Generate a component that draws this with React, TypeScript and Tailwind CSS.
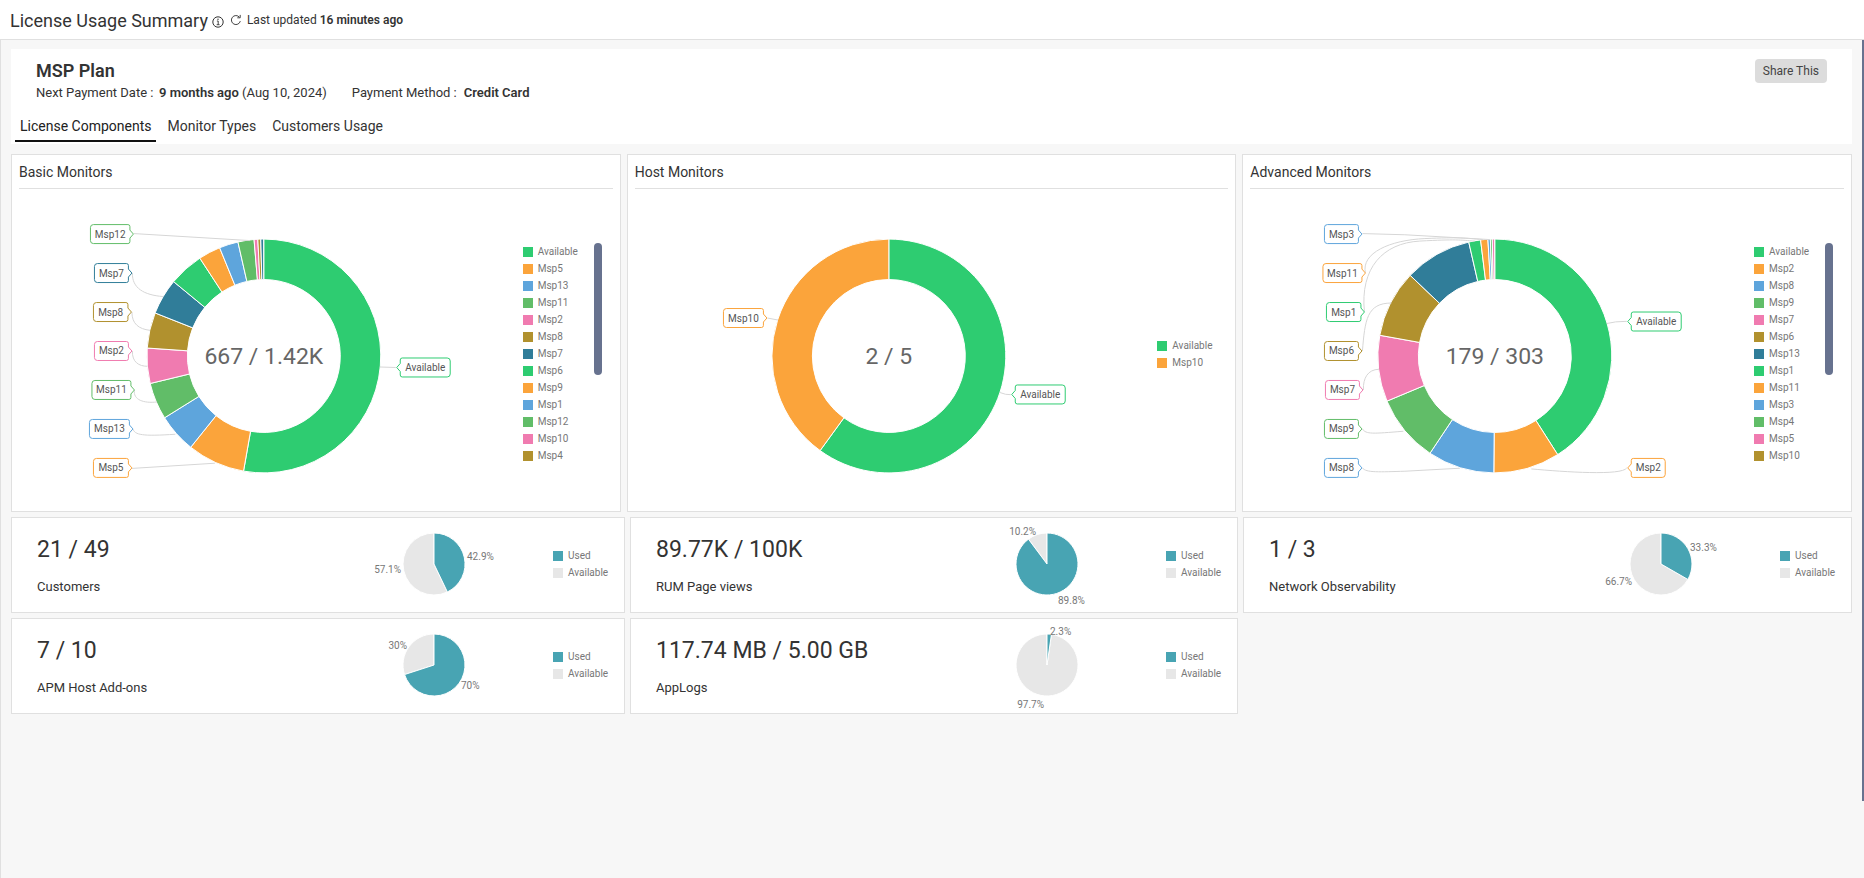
import { useState } from "react";

const GREEN = "#2ecc71";
const ORANGE = "#fba43b";
const BLUE = "#5ea5dc";
const LEAF = "#61bd68";
const PINK = "#f07bb0";
const GOLD = "#b1912e";
const TEAL = "#307d99";

type Slice = { color: string; from: number; to: number };
type Callout = {
  text: string;
  color: string;
  left: number;
  right: number;
  y: number;
  side: "left" | "right";
  line: string;
};
type LegendItem = { text: string; color: string };
type DonutData = {
  title: string;
  total: string;
  originX: number;
  width: number;
  slices: Slice[];
  callouts: Callout[];
  legend: LegendItem[];
  scroll: boolean;
};

const palette = [GREEN, ORANGE, BLUE, LEAF, PINK, GOLD, TEAL];
const colored = (names: string[]): LegendItem[] =>
  names.map((text, i) => ({ text, color: palette[i % palette.length] }));
const slicesFrom = (bounds: number[]): Slice[] =>
  bounds.slice(1).map((to, i) => ({ from: bounds[i], to, color: palette[i % palette.length] }));

const donuts: DonutData[] = [
  {
    title: "Basic Monitors",
    total: "667 / 1.42K",
    originX: 252,
    width: 511,
    slices: slicesFrom([0, 190, 218.7, 238.1, 256.4, 273.9, 291.6, 309.5, 326.8, 337.8, 347.2, 355.2, 357.05, 358.5, 359.9]),
    callouts: [
      { text: "Msp12", color: LEAF, left: -173.5, right: -134, y: -122, side: "left", line: "M-130 -122.5L-14 -115.5" },
      { text: "Msp7", color: TEAL, left: -169.5, right: -135.5, y: -83, side: "left", line: "M-131.5 -83C-132 -68 -120 -61 -101 -59.5" },
      { text: "Msp8", color: GOLD, left: -170.5, right: -136, y: -44, side: "left", line: "M-132 -44C-132 -32 -125 -27 -114 -25.7" },
      { text: "Msp2", color: PINK, left: -169.5, right: -135.5, y: -5, side: "left", line: "M-131.5 -5C-132 6 -125 10.3 -116.5 10.3" },
      { text: "Msp11", color: LEAF, left: -172, right: -133, y: 34, side: "left", line: "M-129.5 34C-131 44 -120 47.5 -107 46" },
      { text: "Msp13", color: BLUE, left: -174.5, right: -134.5, y: 73, side: "left", line: "M-131 73C-129 79 -122 80.5 -88.5 78.3" },
      { text: "Msp5", color: ORANGE, left: -170.5, right: -135.5, y: 112, side: "left", line: "M-132 112.5L-49 107.3" },
      { text: "Available", color: GREEN, left: 136.5, right: 186.5, y: 11.5, side: "right", line: "M116 11L132 11.5" },
    ],
    legend: colored(["Available", "Msp5", "Msp13", "Msp11", "Msp2", "Msp8", "Msp7", "Msp6", "Msp9", "Msp1", "Msp12", "Msp10", "Msp4"]),
    scroll: true,
  },
  {
    title: "Host Monitors",
    total: "2 / 5",
    originX: 261,
    width: 530,
    slices: slicesFrom([0, 216, 360]),
    callouts: [
      { text: "Msp10", color: ORANGE, left: -165.5, right: -125.5, y: -38, side: "left", line: "M-121.5 -38L-111 -36" },
      { text: "Available", color: GREEN, left: 126.5, right: 176.5, y: 38.5, side: "right", line: "M111 36.5Q117 39 122 38.7" },
    ],
    legend: colored(["Available", "Msp10"]),
    scroll: false,
  },
  {
    title: "Advanced Monitors",
    total: "179 / 303",
    originX: 252,
    width: 511,
    slices: slicesFrom([0, 147.5, 180.5, 213.7, 247.3, 280.2, 313.6, 347.1, 353, 356.6, 357.8, 358.75, 359.9]),
    callouts: [
      { text: "Msp3", color: BLUE, left: -170.5, right: -136.5, y: -122, side: "left", line: "M-132.5 -122.5L-90 -121.3L-5 -116.5" },
      { text: "Msp11", color: ORANGE, left: -172, right: -133, y: -83, side: "left", line: "M-129.5 -83C-134 -103 -105 -116 -70 -117.5S-30 -118 -12 -116.5" },
      { text: "Msp1", color: GREEN, left: -168.5, right: -134, y: -44, side: "left", line: "M-130.5 -44C-135 -88 -112 -113 -75 -115S-35 -116 -20 -115" },
      { text: "Msp6", color: GOLD, left: -170.5, right: -136.5, y: -5, side: "left", line: "M-132.5 -5C-130 -36 -128 -53 -103.5 -53" },
      { text: "Msp7", color: PINK, left: -169.5, right: -135.5, y: 34, side: "left", line: "M-131.5 34C-132 22 -127 13.5 -116 13.3" },
      { text: "Msp9", color: LEAF, left: -170.5, right: -136.5, y: 73, side: "left", line: "M-132.5 73C-129 78.5 -122 77.8 -91.5 75.3" },
      { text: "Msp8", color: BLUE, left: -170.5, right: -136.5, y: 112, side: "left", line: "M-132.5 112C-129 117 -115 116 -90 115.3L-35 112.3" },
      { text: "Available", color: GREEN, left: 136.5, right: 186.5, y: -34.5, side: "right", line: "M112 -32.5Q120 -34.7 132 -34.7" },
      { text: "Msp2", color: ORANGE, left: 136.5, right: 170.5, y: 112, side: "right", line: "M36.5 113C70 116 127 120 132 112" },
    ],
    legend: colored(["Available", "Msp2", "Msp8", "Msp9", "Msp7", "Msp6", "Msp13", "Msp1", "Msp11", "Msp3", "Msp4", "Msp5", "Msp10"]),
    scroll: true,
  },
];

const point = (deg: number, r: number) => {
  const a = ((deg - 90) * Math.PI) / 180;
  return `${(Math.cos(a) * r).toFixed(2)} ${(Math.sin(a) * r).toFixed(2)}`;
};

const ring = (from: number, to: number, outer: number, inner: number) => {
  const large = to - from > 180 ? 1 : 0;
  return `M${point(from, outer)}A${outer} ${outer} 0 ${large} 1 ${point(to, outer)}L${point(to, inner)}A${inner} ${inner} 0 ${large} 0 ${point(from, inner)}Z`;
};

const wedge = (from: number, to: number, r: number) =>
  `M0 0L${point(from, r)}A${r} ${r} 0 ${to - from > 180 ? 1 : 0} 1 ${point(to, r)}Z`;

function CalloutBox({ c }: { c: Callout }) {
  const l = c.side === "left" ? c.left : -c.right;
  const r = c.side === "left" ? c.right : -c.left;
  const d = `M${l + 3} -9.5H${r - 2}Q${r} -9.5 ${r} -7.5V-4L${r + 3.5} 0L${r} 4V7.5Q${r} 9.5 ${r - 2} 9.5H${l + 3}Q${l} 9.5 ${l} 6.5V-6.5Q${l} -9.5 ${l + 3} -9.5Z`;
  return (
    <g>
      <path d={c.line} fill="none" stroke="#d6d6d6" />
      <g transform={`translate(0 ${c.y})`}>
        <path d={d} transform={c.side === "right" ? "scale(-1 1)" : undefined} fill="#fff" stroke={c.color} />
        <text x={(c.left + c.right) / 2} y={3.5} textAnchor="middle" className="fill-[#555] text-[10px]">
          {c.text}
        </text>
      </g>
    </g>
  );
}

function Legend({ items }: { items: LegendItem[] }) {
  return (
    <ul className="text-[10px] leading-[17px] text-[#777]">
      {items.map((item) => (
        <li key={item.text} className="flex items-center gap-[5px]">
          <span className="size-2.5 shrink-0" style={{ backgroundColor: item.color }} />
          {item.text}
        </li>
      ))}
    </ul>
  );
}

function DonutCard({ data }: { data: DonutData }) {
  return (
    <section className="border border-[#e0e0e0] bg-white px-[7px]">
      <h2 className="border-b border-[#e0e0e0] pt-0.5 text-sm leading-[31px]">{data.title}</h2>
      <div className="-mx-[7px] flex">
        <svg viewBox={`${-data.originX} -167 ${data.width} 322`} className="h-[322px] min-w-0 flex-1">
          {data.slices.map((s) => (
            <path key={s.from} d={ring(s.from, s.to, 117, 76.5)} fill={s.color} stroke="#fff" strokeWidth="1" />
          ))}
          {data.callouts.map((c) => (
            <CalloutBox key={c.text} c={c} />
          ))}
          <text y="8" textAnchor="middle" className="fill-[#666] text-[23px]">
            {data.total}
          </text>
        </svg>
        {data.scroll ? (
          <div className="flex w-[97px] shrink-0 pt-[54px]">
            <div className="w-[71px]">
              <Legend items={data.legend} />
            </div>
            <div className="h-[132px] w-2 rounded-full bg-[#67728f]" />
          </div>
        ) : (
          <div className="w-[78px] shrink-0 pt-[148px]">
            <Legend items={data.legend} />
          </div>
        )}
      </div>
    </section>
  );
}

type Percent = { text: string; x: number; y: number; anchor: "start" | "end" };
type Stat = { value: string; label: string; used: number; percents: Percent[] };

const stats: Stat[] = [
  {
    value: "21 / 49",
    label: "Customers",
    used: 42.9,
    percents: [
      { text: "42.9%", x: 33, y: -4, anchor: "start" },
      { text: "57.1%", x: -33, y: 9, anchor: "end" },
    ],
  },
  {
    value: "89.77K / 100K",
    label: "RUM Page views",
    used: 89.8,
    percents: [
      { text: "89.8%", x: 11, y: 40, anchor: "start" },
      { text: "10.2%", x: -11, y: -29, anchor: "end" },
    ],
  },
  {
    value: "1 / 3",
    label: "Network Observability",
    used: 33.3,
    percents: [
      { text: "33.3%", x: 29, y: -13, anchor: "start" },
      { text: "66.7%", x: -29, y: 21, anchor: "end" },
    ],
  },
  {
    value: "7 / 10",
    label: "APM Host Add-ons",
    used: 70,
    percents: [
      { text: "70%", x: 27, y: 24, anchor: "start" },
      { text: "30%", x: -27, y: -16, anchor: "end" },
    ],
  },
  {
    value: "117.74 MB / 5.00 GB",
    label: "AppLogs",
    used: 2.3,
    percents: [
      { text: "2.3%", x: 3, y: -30, anchor: "start" },
      { text: "97.7%", x: -3, y: 43, anchor: "end" },
    ],
  },
];

const usageLegend: LegendItem[] = [
  { text: "Used", color: "#48a4b3" },
  { text: "Available", color: "#e7e7e7" },
];

function StatCard({ stat }: { stat: Stat }) {
  return (
    <section className="flex h-24 items-start border border-[#e0e0e0] bg-white">
      <div className="flex min-w-0 flex-1 flex-col gap-[11px] pt-4 pl-[25px]">
        <p className="text-[23px] leading-8">{stat.value}</p>
        <p className="text-[13px] leading-5">{stat.label}</p>
      </div>
      <svg viewBox="-70 -46 140 94" className="h-[94px] w-[140px] shrink-0">
        <path d={wedge(stat.used * 3.6, 360, 31)} fill="#e7e7e7" stroke="#fff" />
        <path d={wedge(0, stat.used * 3.6, 31)} fill="#48a4b3" stroke="#fff" />
        {stat.percents.map((p) => (
          <text key={p.text} x={p.x} y={p.y} textAnchor={p.anchor} className="fill-[#777] text-[10px]">
            {p.text}
          </text>
        ))}
      </svg>
      <div className="w-[120px] shrink-0 pt-[29px] pl-[49px]">
        <Legend items={usageLegend} />
      </div>
    </section>
  );
}

const tabs = ["License Components", "Monitor Types", "Customers Usage"];

export default function App() {
  const [active, setActive] = useState(tabs[0]);
  return (
    <div className="flex min-h-screen flex-col bg-[#f7f7f7] font-['Roboto',sans-serif] text-[#333]">
      <header className="flex h-10 items-center border-b border-[#e0e0e0] bg-white pl-2.5">
        <h1 className="pt-0.5 text-lg">License Usage Summary</h1>
        <svg viewBox="0 0 12 12" className="mt-1 ml-1 size-3" fill="none" stroke="#333">
          <circle cx="6" cy="6" r="5.2" strokeWidth="1" />
          <path d="M4.9 5h1.3v3.6M4.7 8.7h2.9" strokeWidth="0.9" />
          <circle cx="6" cy="3.2" r="0.7" fill="#333" stroke="none" />
        </svg>
        <button type="button" aria-label="Refresh" className="ml-1.5">
          <svg viewBox="0 0 12 12" className="size-3" fill="none" stroke="#444">
            <path d="M10.3 7.1A4.5 4.5 0 1 1 9.4 3.2" />
            <path d="M10.2 0.9V3.8H7.3" />
          </svg>
        </button>
        <p className="ml-[5px] text-xs">
          Last updated <b className="font-semibold">16 minutes ago</b>
        </p>
      </header>
      <div className="flex flex-1 items-start border-l border-[#e0e0e0]">
        <main className="min-w-0 flex-1 pt-[9px] pr-2.5 pl-2.5">
          <section className="bg-white">
            <div className="flex items-start justify-between pt-2.5 pr-[25px] pl-[25px]">
              <div>
                <h2 className="text-lg leading-6 font-semibold">MSP Plan</h2>
                <dl className="flex text-[13px] leading-5">
                  <dt className="w-[123px]">Next Payment Date :</dt>
                  <dd>
                    <b className="font-semibold">9 months ago</b> (Aug 10, 2024)
                  </dd>
                  <dt className="ml-[25px] w-28">Payment Method :</dt>
                  <dd>
                    <b className="font-semibold">Credit Card</b>
                  </dd>
                </dl>
              </div>
              <button type="button" className="h-6 rounded bg-[#dcdcdc] px-2 text-xs text-[#444]">
                Share This
              </button>
            </div>
            <div role="tablist" className="flex gap-1.5 pt-[11px] pb-0.5 pl-1">
              {tabs.map((tab) => (
                <button
                  key={tab}
                  type="button"
                  role="tab"
                  aria-selected={active === tab}
                  onClick={() => setActive(tab)}
                  className={
                    active === tab
                      ? "border-b-2 border-[#111] px-[5px] pb-0.5 text-sm leading-6 text-[#222]"
                      : "border-b-2 border-transparent px-[5px] pb-0.5 text-sm leading-6"
                  }
                >
                  {tab}
                </button>
              ))}
            </div>
          </section>
          <div className="mt-2.5 grid grid-cols-3 gap-1.5">
            {donuts.map((d) => (
              <DonutCard key={d.title} data={d} />
            ))}
          </div>
          <div className="mt-[5px] grid grid-cols-[614fr_608fr_609fr] gap-[5px]">
            {stats.map((s) => (
              <StatCard key={s.label} stat={s} />
            ))}
          </div>
        </main>
        <div className="h-[761px] w-0.5 bg-[#67728f]" />
      </div>
    </div>
  );
}
